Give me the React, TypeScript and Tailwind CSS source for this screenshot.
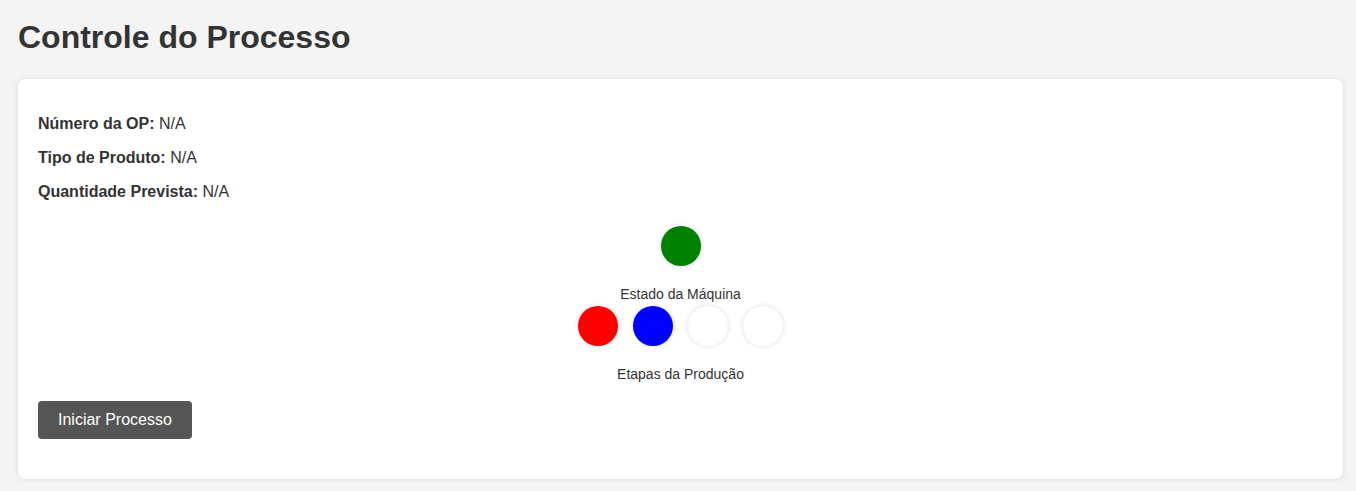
const STAGES = ['bg-[#ff0000]', 'bg-[#0000ff]', 'bg-white', 'bg-white'];

const INFO = [
  { label: 'Número da OP:', value: 'N/A' },
  { label: 'Tipo de Produto:', value: 'N/A' },
  { label: 'Quantidade Prevista:', value: 'N/A' },
];

export default function App() {
  return (
    <div className="min-h-screen bg-[#f4f4f4] pl-[18px] pr-[13px] pt-[19px] pb-4 font-['Liberation_Sans',Arial,sans-serif] text-[#333]">
      <h1 className="mb-[23px] text-[32px] font-bold leading-[37px]">Controle do Processo</h1>

      <div className="rounded-lg bg-white px-5 pt-[36px] pb-[40px] shadow-[0_0_6px_rgba(0,0,0,0.1)]">
        <div className="flex flex-col gap-4">
          {INFO.map((item) => (
            <p key={item.label} className="text-base leading-[18px]">
              <strong>{item.label}</strong> {item.value}
            </p>
          ))}
        </div>

        <div className="mt-[25px] flex flex-col items-center">
          <div className="h-10 w-10 rounded-full bg-[#008000] shadow-[0_0_5px_rgba(0,0,0,0.15)]" />
          <p className="mt-5 text-sm leading-4">Estado da Máquina</p>
          <div className="mt-1 flex gap-[15px]">
            {STAGES.map((color, i) => (
              <div
                key={i}
                className={`h-10 w-10 rounded-full ${color} shadow-[0_0_5px_rgba(0,0,0,0.15)]`}
              />
            ))}
          </div>
          <p className="mt-5 text-sm leading-4">Etapas da Produção</p>
        </div>

        <button className="mt-[19px] h-[38px] rounded bg-[#555] px-5 text-base leading-[36px] text-white">
          Iniciar Processo
        </button>
      </div>
    </div>
  );
}
